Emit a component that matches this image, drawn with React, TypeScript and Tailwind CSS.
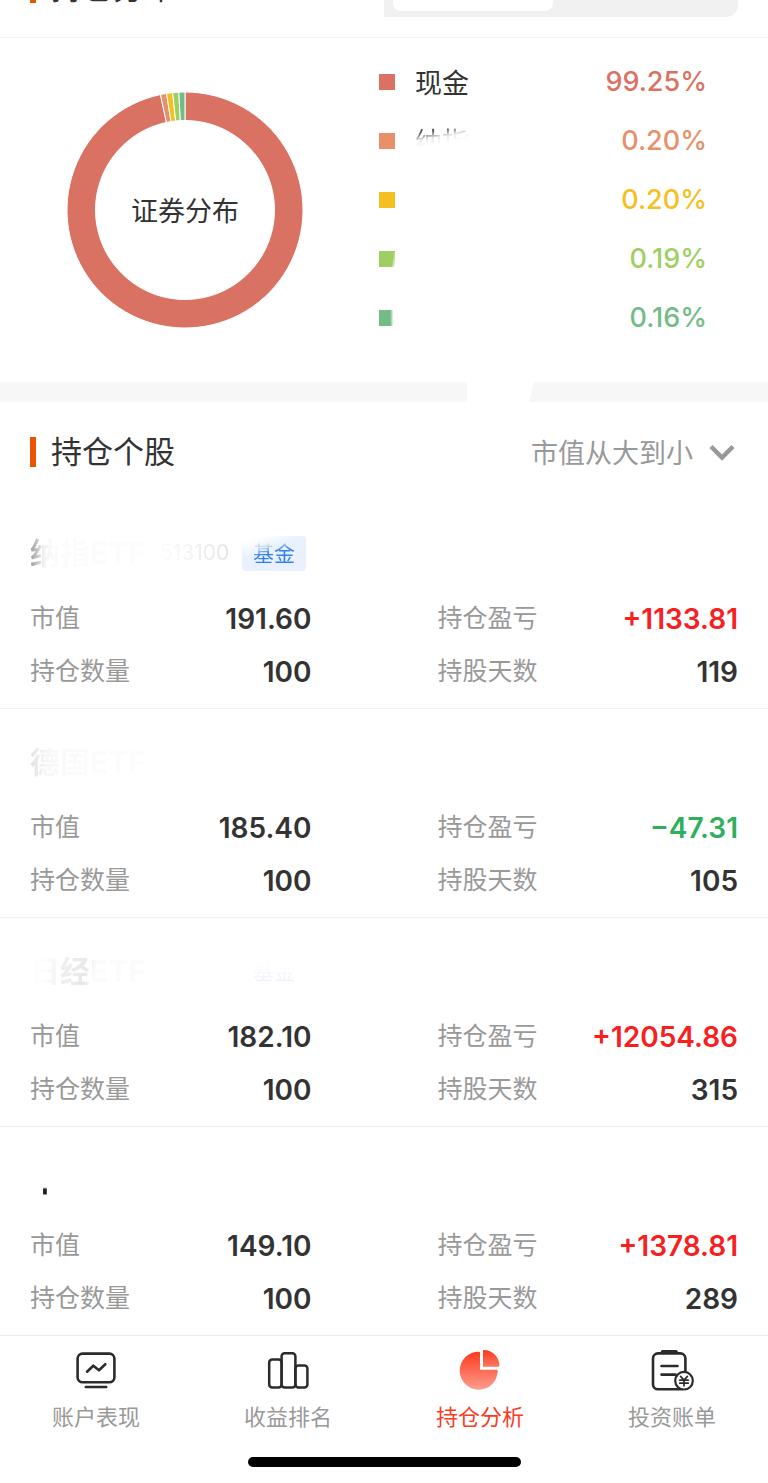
import React from "react";
import clsx from "clsx";

const slices = [
  { from: 0, to: 348, color: "#d97263" },
  { from: 348, to: 351, color: "#e8906a" },
  { from: 351, to: 354, color: "#f3c01f" },
  { from: 354, to: 357, color: "#9fcf63" },
  { from: 357, to: 360, color: "#74bb88" },
];

const legend = [
  { label: "现金", value: "99.25%", box: "bg-[#d97263]", text: "text-[#d97263]", name: "text-[#333]" },
  {
    label: "纳指",
    value: "0.20%",
    box: "bg-[#e8906a]",
    text: "text-[#e8906a]",
    name: "bg-[linear-gradient(170deg,#555_30%,#e4e4e4_42%,transparent_55%)] bg-clip-text text-transparent",
  },
  { label: "", value: "0.20%", box: "bg-[#f3c01f]", text: "text-[#f3c01f]", name: "" },
  {
    label: "",
    value: "0.19%",
    box: "bg-[linear-gradient(100deg,#9fcf63_80%,transparent)]",
    text: "text-[#9fcf63]",
    name: "",
  },
  {
    label: "",
    value: "0.16%",
    box: "bg-[linear-gradient(to_right,#74bb88_70%,transparent_90%)]",
    text: "text-[#74bb88]",
    name: "",
  },
];

const holdings = [
  {
    name: "纳指ETF",
    nameStyle: "bg-[linear-gradient(to_right,#999,#f2f2f2_12%,#fbfbfb_20%,#fcfcfc)]",
    code: "513100",
    tag: "基金",
    tagStyle: "bg-[linear-gradient(160deg,#fff_10%,#e8f1fd_40%)]",
    tagText: "bg-[linear-gradient(165deg,#c5dbf8_25%,#2f80ed_45%)]",
    marketValue: "191.60",
    profit: "+1133.81",
    amount: "100",
    days: "119",
  },
  {
    name: "德国ETF",
    nameStyle: "bg-[linear-gradient(to_right,#e2e2e2,#f8f8f8_15%,#fbfbfb_50%,#fcfcfc)]",
    marketValue: "185.40",
    profit: "−47.31",
    amount: "100",
    days: "105",
  },
  {
    name: "日经ETF",
    nameStyle: "bg-[linear-gradient(100deg,#fdfdfd_15%,#eee_30%,#e8e8e8_48%,#fbfbfb_55%)]",
    tag: "基金",
    tagStyle: "",
    tagText: "bg-[linear-gradient(to_bottom,#fdfdff_30%,#edf1fc_80%)]",
    marketValue: "182.10",
    profit: "+12054.86",
    amount: "100",
    days: "315",
  },
  {
    name: "中",
    nameStyle: "bg-[linear-gradient(to_bottom,transparent_70%,#222_76%)]",
    marketValue: "149.10",
    profit: "+1378.81",
    amount: "100",
    days: "289",
  },
];

const tabs = [
  { label: "账户表现", icon: <ScreenIcon /> },
  { label: "收益排名", icon: <RankIcon /> },
  { label: "持仓分析", icon: <PieIcon />, active: true },
  { label: "投资账单", icon: <BillIcon /> },
];

function slicePath(from: number, to: number) {
  const point = (deg: number, r: number) => {
    const a = ((deg - 90) * Math.PI) / 180;
    return `${118 + r * Math.cos(a)} ${118 + r * Math.sin(a)}`;
  };
  const large = to - from > 180 ? 1 : 0;
  return `M${point(from, 118)}A118 118 0 ${large} 1 ${point(to, 118)}L${point(to, 89.5)}A89.5 89.5 0 ${large} 0 ${point(from, 89.5)}Z`;
}

function Donut() {
  return (
    <svg viewBox="0 0 236 236" className="col-start-1 row-start-1 size-[236px]" aria-hidden="true">
      {slices.map((s) => (
        <path key={s.color} d={slicePath(s.from, s.to)} fill={s.color} stroke="#fff" strokeWidth="1" />
      ))}
    </svg>
  );
}

function ScreenIcon() {
  return (
    <svg viewBox="0 0 48 48" className="size-12" fill="none" stroke="#2b2b2b" strokeWidth="2.6" strokeLinecap="round" strokeLinejoin="round">
      <rect x="5.6" y="7.6" width="36.8" height="28.6" rx="5" />
      <path d="M13.8 41h20.4M15 25.7l6.3-6 5.7 4.5 6.3-6" />
    </svg>
  );
}

function RankIcon() {
  return (
    <svg viewBox="0 0 48 48" className="size-12" fill="none" stroke="#2b2b2b" strokeWidth="2.5">
      <rect x="5.2" y="13.6" width="12.4" height="28" rx="3" />
      <rect x="17.6" y="7.2" width="13.8" height="34.4" rx="3" />
      <rect x="31.4" y="19.4" width="12" height="22.2" rx="3" />
    </svg>
  );
}

function PieIcon() {
  return (
    <svg viewBox="0 0 48 48" className="size-12">
      <defs>
        <linearGradient id="pie" gradientUnits="userSpaceOnUse" x1="0" y1="6" x2="0" y2="44">
          <stop offset="0" stopColor="#fc3a1e" />
          <stop offset="1" stopColor="#fd9f90" />
        </linearGradient>
        <linearGradient id="wedge" gradientUnits="userSpaceOnUse" x1="0" y1="4" x2="0" y2="21">
          <stop offset="0" stopColor="#fc3a1e" />
          <stop offset="1" stopColor="#fd7863" />
        </linearGradient>
      </defs>
      <path fill="url(#pie)" d="M23 5.7a1 1 0 0 1 1 1v17h16.7a1 1 0 0 1 1 1A19 19 0 1 1 23 5.7Z" />
      <path fill="url(#wedge)" d="M27 4.8a.8.8 0 0 1 .8-.8A15.7 15.7 0 0 1 43.4 20a.8.8 0 0 1-.8.8H27Z" />
    </svg>
  );
}

function BillIcon() {
  return (
    <svg viewBox="0 0 48 48" className="size-12" fill="none" stroke="#2b2b2b" strokeWidth="2.6" strokeLinecap="round">
      <rect x="5" y="7.4" width="32.4" height="35.8" rx="5" />
      <path d="M14.5 5.6h13.6" strokeWidth="3.4" />
      <path d="M13.5 20h16M13.5 28.6h14" />
      <circle cx="36" cy="34.7" r="8.8" fill="#fff" strokeWidth="2.2" />
      <path d="M32.6 30.4l3.4 3.6 3.4-3.6M36 34v5.8M31.8 34.2h8.4M31.8 37.2h8.4" strokeWidth="1.7" />
    </svg>
  );
}

function SectionTitle({ children }: { children: React.ReactNode }) {
  return (
    <h2 className="flex h-[30px] shrink-0 items-center gap-[15px] text-[31px] leading-[30px] text-[#333]">
      <span className="h-[30px] w-1.5 bg-[#ea5504]" />
      {children}
    </h2>
  );
}

function Field({ label, value, color = "text-[#333]" }: { label: string; value: string; color?: string }) {
  return (
    <div className="flex h-[53px] items-center justify-between">
      <dt className="text-[25px] text-[#999]">{label}</dt>
      <dd className={clsx("text-[28px] font-semibold", color)}>{value}</dd>
    </div>
  );
}

export default function App() {
  return (
    <div className="w-full bg-white font-['Inter','Noto_Sans_CJK_SC',sans-serif]">
      <header className="flex h-[38px] items-end justify-between overflow-hidden border-b border-[#f3f3f3] px-[30px]">
        <div className="pb-[34px]">
          <SectionTitle>持仓分布</SectionTitle>
        </div>
        <div className="mb-5 flex h-[60px] w-1/2 max-w-[354px] rounded-br-xl bg-[#f1f1f1] px-[9px] py-1.5">
          <button aria-label="证券" className="w-40 rounded-lg bg-white" />
          <button aria-label="行业" className="flex-1" />
        </div>
      </header>

      <section className="flex h-[344px] items-start justify-between pr-[61px] pl-[67px]">
        <div className="mt-[54px] grid place-items-center">
          <Donut />
          <span className="col-start-1 row-start-1 pt-1 text-[27px] text-[#333]">证券分布</span>
        </div>
        <ul className="mt-[14px] w-[328px]">
          {legend.map((item, i) => (
            <li key={i} className="flex h-[59px] items-center text-[27px]">
              <span className={clsx("size-4", item.box)} />
              <span className={clsx("ml-5 pt-1.5", item.name)}>{item.label}</span>
              <span className={clsx("ml-auto pt-0.5 font-medium", item.text)}>{item.value}</span>
            </li>
          ))}
        </ul>
      </section>

      <div className="flex h-5 gap-[62px]">
        <div className="grow-[467] bg-[#f7f7f7]" />
        <div className="grow-[239] bg-[#f7f7f7] [clip-path:polygon(5px_0,100%_0,100%_100%,0_100%)]" />
      </div>

      <main>
        <div className="flex h-[98px] items-center justify-between pt-0.5 pr-8 pl-[30px]">
          <SectionTitle>持仓个股</SectionTitle>
          <label className="flex items-center gap-[15px]">
            <select aria-label="排序" className="appearance-none bg-transparent pt-1 text-[27px] text-[#999]">
              <option>市值从大到小</option>
            </select>
            <svg viewBox="0 0 28 20" className="h-5 w-7" fill="none" stroke="#999" strokeWidth="4.5">
              <path d="M3 4.5l11 11 11-11" />
            </svg>
          </label>
        </div>

        {holdings.map((h, i) => (
          <article
            key={h.name}
            className={clsx("px-[30px] pt-8 pb-2.5", i < holdings.length - 1 && "border-b border-[#f1f1f1]")}
          >
            <div className="flex h-[42px] items-center">
              <h3 className="w-[130px] text-[30px] leading-[42px] font-bold whitespace-nowrap">
                <span className={clsx("bg-clip-text text-transparent", h.nameStyle)}>{h.name}</span>
              </h3>
              <span className="w-[82px] bg-[linear-gradient(to_right,#fcfcfc,#f2f2f2_40%,#ddd)] bg-clip-text text-[21px] text-transparent">
                {h.code}
              </span>
              {h.tag && (
                <span className={clsx("rounded px-[11px] text-[21px] leading-[35px]", h.tagStyle)}>
                  <span className={clsx("bg-clip-text text-transparent", h.tagText)}>{h.tag}</span>
                </span>
              )}
            </div>
            <dl className="mt-[18px] grid grid-cols-[281fr_300fr] gap-x-[126px]">
              <Field label="市值" value={h.marketValue} />
              <Field
                label="持仓盈亏"
                value={h.profit}
                color={h.profit.startsWith("+") ? "text-[#f8201f]" : "text-[#2fae5b]"}
              />
              <Field label="持仓数量" value={h.amount} />
              <Field label="持股天数" value={h.days} />
            </dl>
          </article>
        ))}
      </main>

      <footer className="border-t border-[#ececec] pb-4">
        <nav className="grid grid-cols-4 pt-2.5">
          {tabs.map((tab) => (
            <a
              key={tab.label}
              href="#"
              className={clsx(
                "flex flex-col items-center gap-2 text-[22px] leading-[30px]",
                tab.active ? "text-[#fc3a1e]" : "text-[#999]"
              )}
            >
              {tab.icon}
              {tab.label}
            </a>
          ))}
        </nav>
        <div className="mx-auto mt-[25px] h-2.5 w-[273px] rounded-full bg-black" />
      </footer>
    </div>
  );
}
